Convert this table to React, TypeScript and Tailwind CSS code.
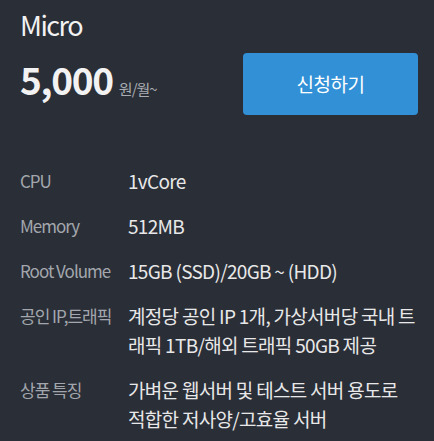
import React from "react";

const rows: { label: string; value: string }[] = [
  { label: "CPU", value: "1vCore" },
  { label: "Memory", value: "512MB" },
  { label: "Root Volume", value: "15GB (SSD)/20GB ~ (HDD)" },
  { label: "공인 IP,트래픽", value: "계정당 공인 IP 1개, 가상서버당 국내 트래픽 1TB/해외 트래픽 50GB 제공" },
  { label: "상품 특징", value: "가벼운 웹서버 및 테스트 서버 용도로 적합한 저사양/고효율 서버" },
];

export default function App() {
  return (
    <div
      className="w-[434px] h-[441px] bg-[#2a2e37] overflow-hidden pl-[20px] pr-[16px] pt-[7px]"
      style={{ fontFamily: '"Noto Sans CJK KR", "Noto Sans", sans-serif' }}
    >
      <div className="text-[27px] leading-[36px] text-[#f2f2f2] tracking-[-1.5px]">Micro</div>
      <div className="flex items-start justify-between mt-[10px]">
        <div className="flex items-baseline mt-[4px]">
          <span className="text-[37px] leading-[44px] font-bold text-[#f2f2f2] tracking-[-1.3px]">5,000</span>
          <span className="ml-[6px] text-[15px] text-[#a9adb3] tracking-[-1px]">원/월~</span>
        </div>
        <button className="w-[175px] h-[62px] rounded-[4px] bg-[#3190d6] text-white text-[19px] tracking-[-0.5px]">
          신청하기
        </button>
      </div>
      <div className="mt-[51px] flex flex-col gap-[16px]">
        {rows.map((r) => (
          <div key={r.label} className="flex">
            <div className="w-[108px] shrink-0 text-[17px] leading-[29px] text-[#a3a7ad] tracking-[-1px]">
              {r.label}
            </div>
            <div className="w-[287px] shrink-0 text-[19px] leading-[29px] text-[#e8e8e8] tracking-[-0.7px] break-all">
              {r.value}
            </div>
          </div>
        ))}
      </div>
    </div>
  );
}
